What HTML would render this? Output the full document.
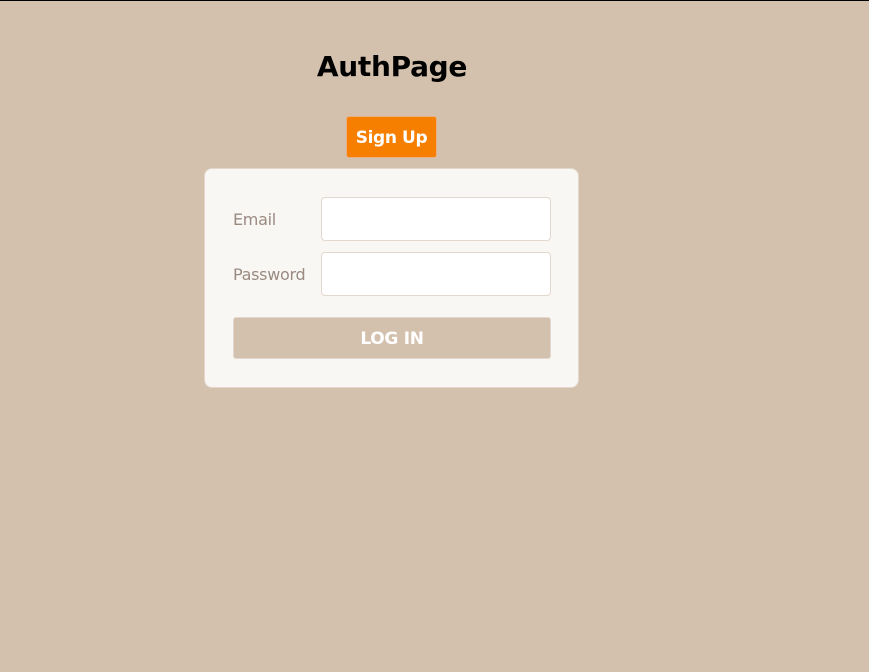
<!DOCTYPE html>
<html><head><style>
html,body{margin:0;padding:0;}
body{width:869px;height:672px;background:#d4c1ad;position:relative;overflow:hidden;font-family:"DejaVu Sans","Liberation Sans",sans-serif;}
.top{position:absolute;left:0;top:0;width:869px;height:1px;background:#000;}
h1{position:absolute;left:0;width:784px;top:47px;margin:0;text-align:center;font-size:28px;font-weight:bold;color:#000;line-height:40px;letter-spacing:-0.3px;}
.su{position:absolute;left:346px;top:116px;width:91px;height:42px;background:#f77f00;border:1px solid #e8b080;border-radius:3px;color:#fff;font-weight:bold;font-size:17px;line-height:42px;text-align:center;box-sizing:border-box;letter-spacing:-0.4px;}
.card{position:absolute;left:204px;top:168px;width:375px;height:220px;background:#f9f7f4;border:1px solid #e2d8cd;border-radius:8px;box-sizing:border-box;}
.lbl{position:absolute;left:233px;font-size:16px;color:#9a8a80;letter-spacing:-0.3px;}
.inp{position:absolute;left:321px;width:230px;height:44px;background:#fff;border:1px solid #e2d8cd;border-radius:4px;box-sizing:border-box;}
.btn{position:absolute;left:233px;top:317px;width:318px;height:42px;background:#d4c1ad;border:1px solid #e2d8cd;border-radius:3px;box-sizing:border-box;color:#fff;font-weight:bold;font-size:17px;line-height:42px;text-align:center;letter-spacing:-0.3px;}
</style></head><body>
<div class="top"></div>
<h1>AuthPage</h1>
<div class="su">Sign Up</div>
<div class="card"></div>
<div class="lbl" style="top:210px">Email</div>
<div class="inp" style="top:197px"></div>
<div class="lbl" style="top:265px">Password</div>
<div class="inp" style="top:252px"></div>
<div class="btn">LOG IN</div>
</body></html>
